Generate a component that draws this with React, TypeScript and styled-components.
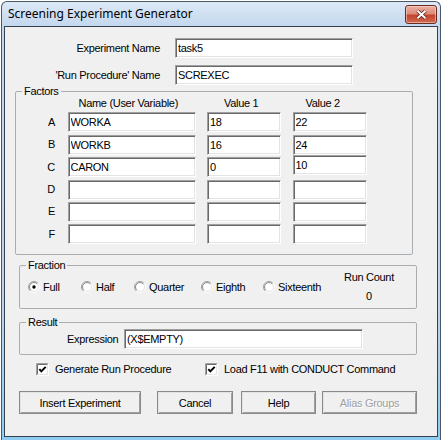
import React from "react";
import styled, { createGlobalStyle } from "styled-components";

const GlobalStyle = createGlobalStyle`
  html, body {
    margin: 0;
    padding: 0;
    background: #ffffff;
  }
  body {
    font-family: "Liberation Sans", Arial, sans-serif;
  }
`;

const Window = styled.div`
  box-sizing: border-box;
  width: 440px;
  height: 439px;
  margin: 1px 0 0 1px;
  border: 1px solid #4a5767;
  border-bottom: 0;
  border-radius: 6px 6px 0 0;
  padding: 0 2px 3px;
  display: flex;
  flex-direction: column;
  background: linear-gradient(180deg, #dde9f6 0px, #c3d7ee 24px, #bcd3ec 70%, #8fcdf0 100%);
`;

const TitleBar = styled.div`
  height: 24px;
  flex: none;
  display: flex;
  align-items: flex-start;
  justify-content: space-between;
  padding: 0 1px 0 4px;
`;

const Title = styled.span`
  margin-top: 4px;
  font-family: "Noto Sans", "Liberation Sans", sans-serif;
  font-size: 12px;
  line-height: 16px;
  color: #000000;
`;

const CloseButton = styled.div`
  box-sizing: border-box;
  margin-top: 3px;
  width: 32px;
  height: 19px;
  border: 1px solid #6b2a20;
  border-radius: 3px;
  display: flex;
  align-items: center;
  justify-content: center;
  background: linear-gradient(180deg, #eab1a5 0%, #dc8b78 45%, #c4452f 55%, #cf6a4f 100%);
  box-shadow: inset 0 0 0 1px rgba(255, 220, 210, 0.55);
`;

const Client = styled.div`
  flex: 1;
  border: 1px solid #37414d;
  background: #f0f0f0;
  display: flex;
  flex-direction: column;
  font-size: 11px;
  letter-spacing: -0.3px;
  color: #000000;
`;

const NameForm = styled.div`
  margin-top: 11px;
  display: grid;
  grid-template-columns: 155px 178px;
  column-gap: 15px;
  row-gap: 7px;
`;

const FieldLabel = styled.span`
  justify-self: end;
  align-self: center;
  line-height: 13px;
`;

const Edit = styled.input<{ $w?: number }>`
  box-sizing: border-box;
  width: ${(p) => (p.$w ? `${p.$w}px` : "100%")};
  height: 20px;
  margin: 0;
  padding: 0 2px;
  border: 1px solid;
  border-color: #a0a0a0 #ffffff #ffffff #a0a0a0;
  box-shadow: inset 1px 1px 0 #696969, inset -1px -1px 0 #e3e3e3;
  background: #ffffff;
  font-family: "Liberation Sans", Arial, sans-serif;
  font-size: 11px;
  letter-spacing: -0.3px;
  color: #000000;
  outline: none;
`;

const Group = styled.fieldset<{ $left: number; $top: number }>`
  box-sizing: border-box;
  width: 398px;
  min-width: 0;
  margin: ${(p) => p.$top}px 0 0 ${(p) => p.$left}px;
  padding: 0;
  border: 1px solid #a9aeb3;
  border-radius: 2px;
`;

const Legend = styled.legend`
  margin-left: 6px;
  padding: 0 2px;
  line-height: 12px;
  font-size: 11px;
`;

const FactorGrid = styled.div`
  display: grid;
  grid-template-columns: 40px 128px 74px 74px;
  grid-template-rows: 13px repeat(6, 20px);
  column-gap: 11.5px;
  row-gap: 2.4px;
  padding-bottom: 10px;
`;

const ColumnHeader = styled.span<{ $indent: number }>`
  padding-left: ${(p) => p.$indent}px;
  line-height: 13px;
  margin-bottom: 3.6px;
  white-space: nowrap;
`;

const RowLetter = styled.span`
  justify-self: end;
  align-self: center;
  padding-right: 1px;
  line-height: 13px;
`;

const LiftedCell = styled.div<{ $lift: number }>`
  margin-top: ${(p) => -p.$lift}px;
`;

const FractionBody = styled.div`
  display: grid;
  grid-template-columns: 53px 53px 67px 62px 80px 52px;
  height: 32px;
  padding: 0 0 5px 8px;
  align-items: center;
`;

const RadioOption = styled.label`
  display: flex;
  align-items: center;
  gap: 3px;
  line-height: 13px;
  white-space: nowrap;
`;

const RunCount = styled.div`
  align-self: start;
  display: flex;
  flex-direction: column;
  align-items: center;
  gap: 6px;
  line-height: 13px;
  white-space: nowrap;
`;

const ResultBody = styled.div`
  display: flex;
  align-items: center;
  gap: 7px;
  padding: 1px 0 5px 47px;
`;

const ExpressionLabel = styled.span`
  width: 50px;
  text-align: right;
  line-height: 13px;
`;

const CheckRow = styled.div`
  margin-top: 8px;
  padding-left: 31px;
  display: flex;
  height: 13px;
`;

const CheckOption = styled.label<{ $w?: number }>`
  display: flex;
  align-items: center;
  gap: 6px;
  width: ${(p) => (p.$w ? `${p.$w}px` : "auto")};
  line-height: 13px;
  white-space: nowrap;
`;

const ButtonRow = styled.div`
  margin-top: 15px;
  padding-left: 14px;
  display: flex;
`;

const PushButton = styled.button<{ $w: number; $gap: number; $disabled?: boolean }>`
  box-sizing: border-box;
  width: ${(p) => p.$w}px;
  height: 23px;
  margin: 0 0 0 ${(p) => p.$gap}px;
  padding: 0;
  border: 1px solid;
  border-color: #ffffff #696969 #696969 #ffffff;
  box-shadow: inset 1px 1px 0 #e3e3e3, inset -1px -1px 0 #a0a0a0;
  outline: 1px solid #8a8a8a;
  outline-offset: -1px;
  background: #f0f0f0;
  font-family: "Liberation Sans", Arial, sans-serif;
  font-size: 11px;
  letter-spacing: -0.3px;
  color: ${(p) => (p.$disabled ? "#a0a0a0" : "#000000")};
  text-shadow: ${(p) => (p.$disabled ? "1px 1px 0 #ffffff" : "none")};
`;

const RadioMark: React.FC<{ checked?: boolean }> = ({ checked }) => (
  <svg width="12" height="12" viewBox="0 0 12 12">
    <defs>
      <linearGradient id="radioOuter" x1="0" y1="0" x2="1" y2="1">
        <stop offset="0.45" stopColor="#a0a0a0" />
        <stop offset="0.55" stopColor="#ffffff" />
      </linearGradient>
      <linearGradient id="radioInner" x1="0" y1="0" x2="1" y2="1">
        <stop offset="0.45" stopColor="#8c8c8c" />
        <stop offset="0.55" stopColor="#e3e3e3" />
      </linearGradient>
    </defs>
    <circle cx="6" cy="6" r="5.5" fill="none" stroke="url(#radioOuter)" />
    <circle cx="6" cy="6" r="4.5" fill="#ffffff" stroke="url(#radioInner)" />
    {checked && <circle cx="6" cy="6" r="1.7" fill="#000000" />}
  </svg>
);

const CheckMark: React.FC = () => (
  <svg width="13" height="13" viewBox="0 0 13 13">
    <rect x="0" y="0" width="13" height="13" fill="#ffffff" />
    <path d="M0.5 12.5 V0.5 H12.5" fill="none" stroke="#a0a0a0" />
    <path d="M0.5 12.5 H12.5 V0.5" fill="none" stroke="#ffffff" />
    <path d="M1.5 11.5 V1.5 H11.5" fill="none" stroke="#696969" />
    <path d="M1.5 11.5 H11.5 V1.5" fill="none" stroke="#e3e3e3" />
    <path d="M3.3 6.2 L5.3 8.4 L9.7 3.9" fill="none" stroke="#000000" strokeWidth="2" />
  </svg>
);

const CloseGlyph: React.FC = () => (
  <svg width="13" height="11" viewBox="0 0 13 11">
    <path d="M2.5 1.8 L10.5 9.2 M10.5 1.8 L2.5 9.2" stroke="#5a2117" strokeWidth="3.6" />
    <path d="M2.5 1.8 L10.5 9.2 M10.5 1.8 L2.5 9.2" stroke="#ffffff" strokeWidth="2" />
  </svg>
);

type Factor = { letter: string; name: string; v1: string; v2: string; lift?: number };

const factors: Factor[] = [
  { letter: "A", name: "WORKA", v1: "18", v2: "22" },
  { letter: "B", name: "WORKB", v1: "16", v2: "24" },
  { letter: "C", name: "CARON", v1: "0", v2: "10", lift: 2 },
  { letter: "D", name: "", v1: "", v2: "" },
  { letter: "E", name: "", v1: "", v2: "" },
  { letter: "F", name: "", v1: "", v2: "" },
];

const fractions = ["Full", "Half", "Quarter", "Eighth", "Sixteenth"];

const App: React.FC = function () {
  return (
    <>
      <GlobalStyle />
      <Window>
        <TitleBar>
          <Title>Screening Experiment Generator</Title>
          <CloseButton>
            <CloseGlyph />
          </CloseButton>
        </TitleBar>
        <Client>
          <NameForm>
            <FieldLabel>Experiment Name</FieldLabel>
            <Edit readOnly value="task5" />
            <FieldLabel>'Run Procedure' Name</FieldLabel>
            <Edit readOnly value="SCREXEC" />
          </NameForm>

          <Group $left={10} $top={0}>
            <Legend>Factors</Legend>
            <FactorGrid>
              <span />
              <ColumnHeader $indent={11}>Name (User Variable)</ColumnHeader>
              <ColumnHeader $indent={17}>Value 1</ColumnHeader>
              <ColumnHeader $indent={13}>Value 2</ColumnHeader>
              {factors.map((f) => (
                <React.Fragment key={f.letter}>
                  <RowLetter>{f.letter}</RowLetter>
                  <Edit readOnly value={f.name} />
                  <Edit readOnly value={f.v1} />
                  <LiftedCell $lift={f.lift ?? 0}>
                    <Edit readOnly value={f.v2} />
                  </LiftedCell>
                </React.Fragment>
              ))}
            </FactorGrid>
          </Group>

          <Group $left={14} $top={4}>
            <Legend>Fraction</Legend>
            <FractionBody>
              {fractions.map((label, i) => (
                <RadioOption key={label}>
                  <RadioMark checked={i === 0} />
                  {label}
                </RadioOption>
              ))}
              <RunCount>
                <span>Run Count</span>
                <span>0</span>
              </RunCount>
            </FractionBody>
          </Group>

          <Group $left={14} $top={7}>
            <Legend>Result</Legend>
            <ResultBody>
              <ExpressionLabel>Expression</ExpressionLabel>
              <Edit readOnly value="(X$EMPTY)" $w={239} />
            </ResultBody>
          </Group>

          <CheckRow>
            <CheckOption $w={169}>
              <CheckMark />
              Generate Run Procedure
            </CheckOption>
            <CheckOption>
              <CheckMark />
              Load F11 with CONDUCT Command
            </CheckOption>
          </CheckRow>

          <ButtonRow>
            <PushButton $w={122} $gap={0}>Insert Experiment</PushButton>
            <PushButton $w={76} $gap={16}>Cancel</PushButton>
            <PushButton $w={75} $gap={8}>Help</PushButton>
            <PushButton $w={95} $gap={6} $disabled>
              Alias Groups
            </PushButton>
          </ButtonRow>
        </Client>
      </Window>
    </>
  );
};

export default App;
